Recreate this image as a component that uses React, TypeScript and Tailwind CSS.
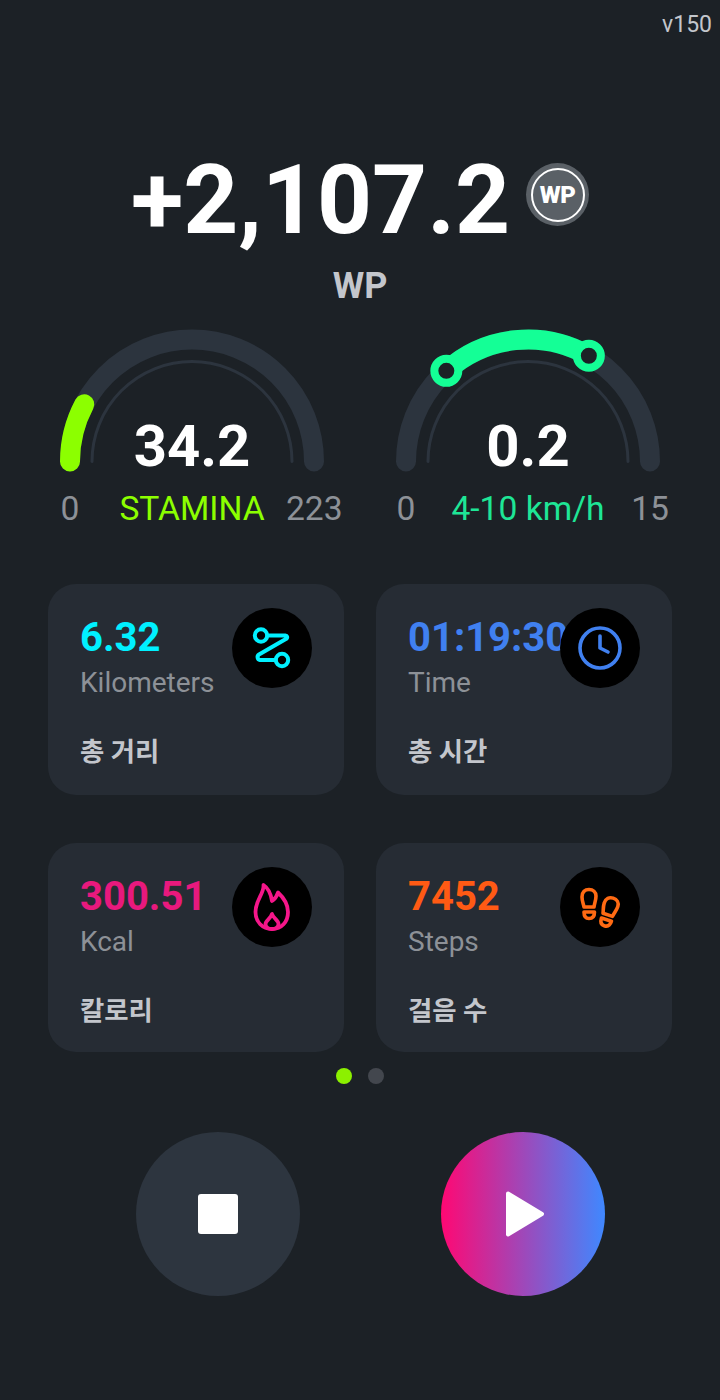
import { Clock } from "lucide-react";
import type { ReactNode } from "react";

const FONT = "[font-family:Roboto,'Noto_Sans_CJK_KR',sans-serif]";

function polar(deg: number, r = 122) {
  const a = (deg * Math.PI) / 180;
  return { x: 142 - r * Math.cos(a), y: 137.5 - r * Math.sin(a) };
}

function Arc({ from, to, r, stroke, width }: { from: number; to: number; r: number; stroke: string; width: number }) {
  const a = polar(from, r);
  const b = polar(to, r);
  return (
    <path
      d={`M${a.x} ${a.y} A${r} ${r} 0 0 1 ${b.x} ${b.y}`}
      fill="none"
      stroke={stroke}
      strokeWidth={width}
      strokeLinecap="round"
    />
  );
}

function Gauge({
  value,
  left,
  right,
  label,
  labelClass,
  children,
}: {
  value: string;
  left: string;
  right: string;
  label: string;
  labelClass: string;
  children: ReactNode;
}) {
  return (
    <div className="flex flex-col items-center">
      <div className="relative h-[165px] w-[284px]">
        <svg width="284" height="165" viewBox="0 0 284 165" className="block">
          <Arc from={0} to={180} r={122} stroke="#2c343e" width={20} />
          <Arc from={0} to={180} r={100} stroke="#2c343e" width={3} />
          {children}
        </svg>
        <div className="absolute inset-x-0 top-[88px] text-center text-[58px] leading-[68px] font-bold text-white">
          {value}
        </div>
      </div>
      <div className="grid w-[300px] grid-cols-[56px_1fr_56px] text-center text-[33.6px] leading-[40px] text-[#8d9197]">
        <span>{left}</span>
        <span className={labelClass}>{label}</span>
        <span>{right}</span>
      </div>
    </div>
  );
}

function Card({
  value,
  unit,
  title,
  color,
  heightClass,
  icon,
}: {
  value: string;
  unit: string;
  title: string;
  color: string;
  heightClass: string;
  icon: ReactNode;
}) {
  return (
    <div className={`relative rounded-[28px] bg-[#262c34] pt-[30px] pl-8 ${heightClass}`}>
      <div className={`text-[40px] leading-[47px] font-bold whitespace-nowrap ${color}`}>{value}</div>
      <div className="mt-[5px] text-[28px] leading-[33px] text-[#8d9197]">{unit}</div>
      <div className="mt-[36px] text-[26.4px] leading-[35px] font-bold text-[#c3c6cc]">{title}</div>
      <div className="absolute top-6 right-8 flex h-20 w-20 items-center justify-center rounded-full bg-black">
        {icon}
      </div>
    </div>
  );
}

function RouteIcon() {
  return (
    <svg width="80" height="80" viewBox="0 0 80 80" fill="none" stroke="#00f0ff" strokeWidth="4" strokeLinecap="round" strokeLinejoin="round">
      <circle cx="29" cy="27.5" r="6.2" />
      <circle cx="50" cy="52" r="6.2" />
      <path d="M35.5 27.5H53.5a1.8 1.8 0 0 1 1.2 3.1L27 46.5a3 3 0 0 0 1 5.5H43.5" />
    </svg>
  );
}

function FlameIcon() {
  return (
    <svg width="80" height="80" viewBox="12 7 80 80" fill="none" stroke="#f5168a" strokeWidth="3.8" strokeLinejoin="round">
      <path d="M43.5 25C44.5 33 35.5 40 35.5 52C35.5 62 42.5 69 52 69C61.5 69 68 62 68 52C68 44 64 38 58 32.5C57 36 55 39 52 41C51 34 48 28 43.5 25Z" />
      <path d="M52 54C51 58.5 45.5 60.5 45.5 64C45.5 67 48 69 52 69C56 69 58.5 67 58.5 64C58.5 60.5 53.5 58.5 52 54Z" />
    </svg>
  );
}

function Sole() {
  return (
    <>
      <path d="M32 37C32 32 35 29.5 39 29.5C43 29.5 46 32 46 36C46 40 44.5 43 44 47L34 47C33.5 44 32 41 32 37Z" />
      <path d="M34 52L44.5 52C44.5 56 42.5 58.5 39 58.5C35.5 58.5 34 56 34 52Z" />
    </>
  );
}

function StepsIcon() {
  return (
    <svg width="80" height="80" viewBox="10 7 80 80" fill="none" stroke="#ff6a13" strokeWidth="3.6" strokeLinejoin="round">
      <Sole />
      <g transform="translate(20 8) rotate(18 39 43)">
        <Sole />
      </g>
    </svg>
  );
}

export default function App() {
  const arcFrom = (Math.atan2(91, -82) * 180) / Math.PI;
  const arcTo = (Math.atan2(106, 61) * 180) / Math.PI;
  const a = polar(180 - arcFrom);
  const b = polar(180 - arcTo);
  return (
    <div className={`h-[1400px] w-[720px] overflow-hidden bg-[#1c2126] ${FONT}`}>
      <div className="pt-[11px] pr-2 text-right text-[23px] leading-[28px] text-[#c3c6cc]">v150</div>

      <div className="mt-[104px] flex items-start justify-center gap-4">
        <span className="text-[96px] leading-[114px] font-bold text-white">+2,107.2</span>
        <div className="mt-5 flex h-[63px] w-[63px] items-center justify-center rounded-full bg-[#5a6066]">
          <div className="flex h-[54px] w-[54px] items-center justify-center rounded-full border-[2.5px] border-white text-[24px] font-black tracking-[-0.5px] text-white">
            WP
          </div>
        </div>
      </div>
      <div className="mt-2 text-center text-[36px] leading-[42px] font-bold text-[#c3c6cc]">WP</div>

      <div className="mt-[17px] grid grid-cols-2 px-6">
        <Gauge value="34.2" left="0" right="223" label="STAMINA" labelClass="text-[#8cff00]">
          <Arc from={0} to={28} r={122} stroke="#8cff00" width={20} />
        </Gauge>
        <Gauge value="0.2" left="0" right="15" label="4-10 km/h" labelClass="text-[#1ee696]">
          <Arc from={180 - arcFrom} to={180 - arcTo} r={122} stroke="#14ff96" width={20} />
          <circle cx={a.x} cy={a.y} r={12} fill="#1c2126" stroke="#14ff96" strokeWidth={8} />
          <circle cx={b.x} cy={b.y} r={12} fill="#1c2126" stroke="#14ff96" strokeWidth={8} />
        </Gauge>
      </div>

      <div className="mt-[55px] grid grid-cols-2 gap-x-8 gap-y-12 px-12">
        <Card heightClass="h-[211px]" value="6.32" unit="Kilometers" title="총 거리" color="text-[#00f0ff]" icon={<RouteIcon />} />
        <Card heightClass="h-[211px]" value="01:19:30" unit="Time" title="총 시간" color="text-[#4080f0]" icon={<Clock size={48} color="#4080f0" strokeWidth={1.8} />} />
        <Card heightClass="h-[209px]" value="300.51" unit="Kcal" title="칼로리" color="text-[#e8197d]" icon={<FlameIcon />} />
        <Card heightClass="h-[209px]" value="7452" unit="Steps" title="걸음 수" color="text-[#ff5a14]" icon={<StepsIcon />} />
      </div>

      <div className="mt-4 flex justify-center gap-4">
        <div className="h-4 w-4 rounded-full bg-[#8cf000]" />
        <div className="h-4 w-4 rounded-full bg-[#43474e]" />
      </div>

      <div className="mt-12 flex pl-[136px]">
        <div className="flex h-[164px] w-[164px] items-center justify-center rounded-full bg-[#2d353f]">
          <div className="h-10 w-10 rounded-[3px] bg-white" />
        </div>
        <div className="ml-[141px] flex h-[164px] w-[164px] items-center justify-center rounded-full bg-linear-to-r/srgb from-[#ff0873] to-[#3f88ff]">
          <svg width="40" height="48" viewBox="0 0 40 48" className="ml-[4px]">
            <path d="M3 3.5L37 24L3 44.5Z" fill="#fff" stroke="#fff" strokeWidth="4" strokeLinejoin="round" />
          </svg>
        </div>
      </div>
    </div>
  );
}
